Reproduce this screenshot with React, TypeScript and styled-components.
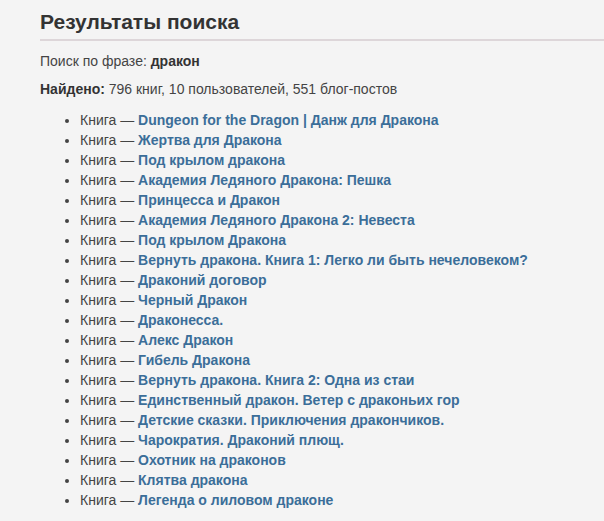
import React from "react";
import styled, { createGlobalStyle } from "styled-components";

const GlobalStyle = createGlobalStyle`
  html, body {
    margin: 0;
    padding: 0;
    background: #f4f4f4;
  }
  body {
    font-family: "Liberation Sans", Arial, sans-serif;
    color: #333;
  }
`;

const books = [
  "Dungeon for the Dragon | Данж для Дракона",
  "Жертва для Дракона",
  "Под крылом дракона",
  "Академия Ледяного Дракона: Пешка",
  "Принцесса и Дракон",
  "Академия Ледяного Дракона 2: Невеста",
  "Под крылом Дракона",
  "Вернуть дракона. Книга 1: Легко ли быть нечеловеком?",
  "Драконий договор",
  "Черный Дракон",
  "Драконесса.",
  "Алекс Дракон",
  "Гибель Дракона",
  "Вернуть дракона. Книга 2: Одна из стаи",
  "Единственный дракон. Ветер с драконьих гор",
  "Детские сказки. Приключения дракончиков.",
  "Чарократия. Драконий плющ.",
  "Охотник на драконов",
  "Клятва дракона",
  "Легенда о лиловом драконе",
];

const App = () => {
  return (
    <>
      <GlobalStyle />
      <Page>
        <Title>Результаты поиска</Title>
        <Info>
          Поиск по фразе: <b>дракон</b>
        </Info>
        <Info>
          <b>Найдено:</b> 796 книг, 10 пользователей, 551 блог-постов
        </Info>
        <Results>
          {books.map((title) => (
            <Item key={title}>
              Книга — <BookLink href="#">{title}</BookLink>
            </Item>
          ))}
        </Results>
      </Page>
    </>
  );
};

const Page = styled.div`
  padding: 10px 0 0 40px;
`;

const Title = styled.h1`
  margin: 0;
  padding: 0 0 6px;
  font-size: 21px;
  line-height: 23px;
  font-weight: bold;
  color: #333;
  border-bottom: 2px solid #ddd6d9;
`;

const Info = styled.p`
  margin: 13px 0 0;
  font-size: 14px;
  line-height: 15px;
  color: #444;

  b {
    color: #333;
  }
`;

const Results = styled.ul`
  margin: 13px 0 0;
  padding: 0 0 0 40px;
  list-style: disc;
`;

const Item = styled.li`
  font-size: 14px;
  line-height: 20px;
  color: #444;
`;

const BookLink = styled.a`
  color: #3b6e99;
  font-weight: bold;
  text-decoration: none;
`;

export default App;
